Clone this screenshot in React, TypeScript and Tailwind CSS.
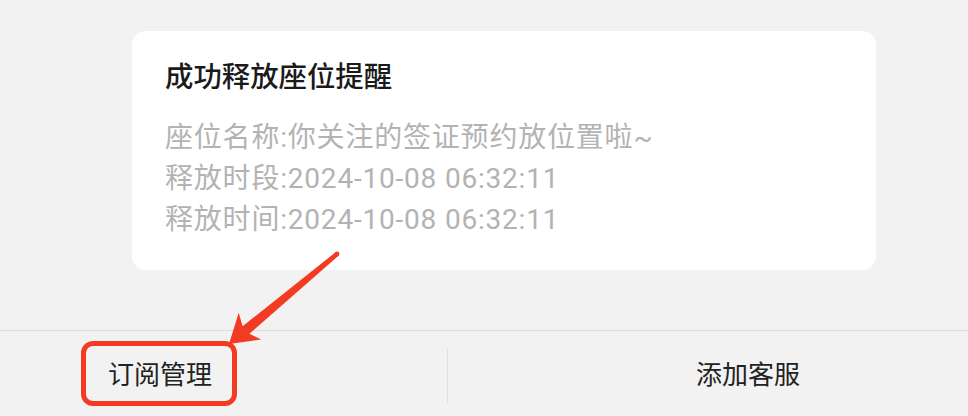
import React from "react";

export default function App() {
  return (
    <div className="relative w-[968px] h-[416px] overflow-hidden bg-[#f2f2f2] font-['Noto_Sans_CJK_SC','Noto_Sans_CJK_JP',sans-serif]">
      <div className="h-[330px] pt-[31px] pl-[132px]">
        <div className="w-[744px] h-[239px] rounded-[14px] bg-white pl-[33px] pt-[24px]">
          <div className="text-[28.4px] leading-[40px] font-medium text-[#1a1a1a]">成功释放座位提醒</div>
          <div className="mt-[22px] font-['Roboto','Noto_Sans_CJK_SC',sans-serif] text-[28px] leading-[41px] tracking-[0.8px] text-[#b3b3b3]">
            <div>座位名称:你关注的签证预约放位置啦~</div>
            <div>释放时段:2024-10-08 06:32:11</div>
            <div>释放时间:2024-10-08 06:32:11</div>
          </div>
        </div>
      </div>
      <div className="h-px bg-[#dcdcdc]" />
      <div className="flex h-[85px] items-start">
        <div className="w-[447px] pl-[108px] pt-[24px] text-[26px] leading-[36px] text-[#222222]">订阅管理</div>
        <div className="mt-[17px] h-[55px] w-px bg-[#e0e0e0]" />
        <div className="pl-[248px] pt-[24px] text-[26px] leading-[36px] text-[#222222]">添加客服</div>
      </div>

      <div className="pointer-events-none absolute left-[81px] top-[341px] h-[65px] w-[156px] rounded-[12px] border-[5px] border-[#f23b22]" />
      <svg className="pointer-events-none absolute left-0 top-0" width="968" height="416" viewBox="0 0 968 416">
        <polygon
          fill="#f23b22"
          points="335.5,252.3 242.6,326.2 238.7,312.7 229,344 261.1,339.6 249.4,333.8 338.5,255.7"
        />
        <circle cx="337" cy="254" r="2.4" fill="#f23b22" />
      </svg>
    </div>
  );
}
